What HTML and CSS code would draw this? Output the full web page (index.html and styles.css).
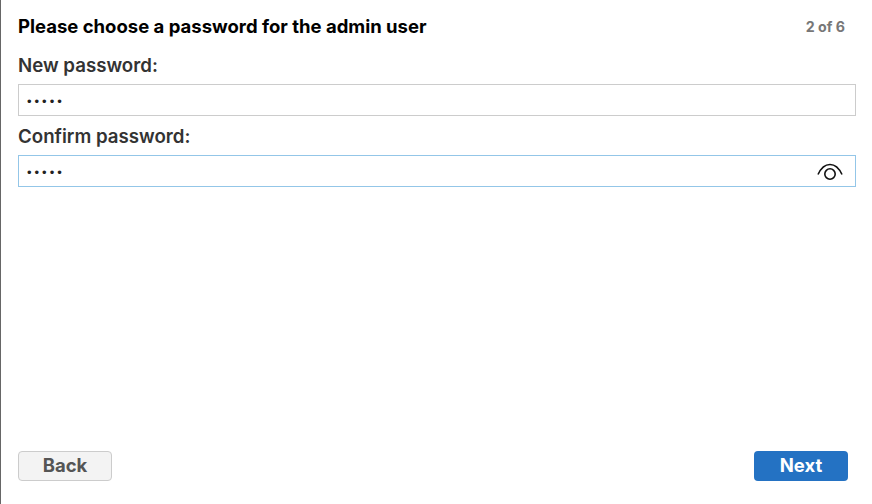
FILE: index.html
```html
<!DOCTYPE html>
<html lang="en">
<head>
    <meta charset="UTF-8">
    <title>Admin password</title>
    <link rel="stylesheet" href="styles.css">
</head>
<body>
    <div class="wizard">
        <div class="wizardHead">
            <h1>Please choose a password for the admin user</h1>
            <span class="steps">2 of 6</span>
        </div>
        <label class="fieldLabel" for="newPass">New password:</label>
        <div class="field">
            <input id="newPass" type="password" value="12345">
        </div>
        <label class="fieldLabel" for="confirmPass">Confirm password:</label>
        <div class="field fieldFocus">
            <input id="confirmPass" type="password" value="12345">
            <svg class="eye" width="26" height="18" viewBox="0 0 26 18" fill="none" stroke="#111" stroke-width="1.600">
                <path d="M1 12.500C4 6 8 2.500 13 2.500s9 3.500 12 10"/>
                <circle cx="13" cy="12" r="5.200"/>
            </svg>
        </div>
        <div class="wizardBtns">
            <button class="btn btnBack">Back</button>
            <button class="btn btnNext">Next</button>
        </div>
    </div>
</body>
</html>
```

FILE: styles.css
```css
*{margin: 0; padding: 0; box-sizing: border-box; font-family: "Inter", "Liberation Sans", sans-serif;}
html, body{height: 100%;}
body{background-color: #fff; border-left: 1px solid #666;}
.wizard{height: 504px; padding: 14px 16px 23px 17px; display: flex; flex-direction: column;}
.wizardHead{display: flex; justify-content: space-between; align-items: center; height: 24px; margin-bottom: 15px;}
h1{font-size: 18.500px; font-weight: 700; color: #000;}
.steps{font-size: 14.200px; font-weight: 700; color: #777; margin-right: 11px;}
.fieldLabel{display: block; font-size: 18.700px; font-weight: 600; color: #333; height: 25px; line-height: 25px; margin-bottom: 6px;}
.field{height: 32px; border: 1px solid #ccc; display: flex; align-items: center; margin-bottom: 8px; padding-right: 12px;}
.field input{flex: 1; height: 100%; border: none; outline: none; padding: 3px 0 0 8px; font-size: 13px; letter-spacing: 3px; color: #222; background: none; font-family: "Liberation Sans", sans-serif;}
.fieldFocus{border-color: #93c6e8;}
.eye{flex: none;}
.wizardBtns{margin-top: auto; display: flex; justify-content: space-between; padding-right: 8px;}
.btn{width: 94px; height: 30px; padding-bottom: 2px; border-radius: 4px; font-size: 18.500px; font-weight: 700; cursor: pointer;}
.btnBack{background-color: #f3f3f3; border: 1px solid #ccc; color: #555;}
.btnNext{background-color: #2472c3; border: none; color: #fff;}
```
